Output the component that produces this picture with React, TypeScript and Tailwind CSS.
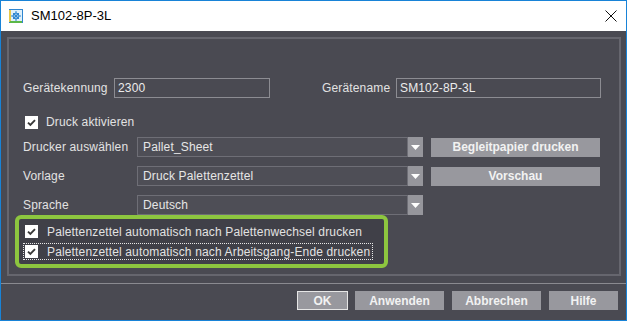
import React from 'react';

function CheckBox() {
  return (
    <div className="flex h-[13px] w-[13px] shrink-0 items-center justify-center bg-white">
      <svg width="13" height="13" viewBox="0 0 13 13">
        <path d="M3 6.6 L5.4 9 L10 4.2" fill="none" stroke="#3a3a3a" strokeWidth="1.9" />
      </svg>
    </div>
  );
}

function Dropdown({ value }: { value: string }) {
  return (
    <div className="flex h-[20px] w-[286px]">
      <div className="flex flex-1 items-center border border-[#6e6e76] bg-[#4e4e56] pl-[5px] text-[#e6e6e6]">
        {value}
      </div>
      <div className="flex w-[15px] items-center justify-center bg-[#96969c] pt-[2px]">
        <svg width="9" height="6" viewBox="0 0 9 6">
          <path d="M0 0 H9 L4.5 5 Z" fill="#ffffff" />
        </svg>
      </div>
    </div>
  );
}

function GrayButton({ label, className }: { label: string; className: string }) {
  return (
    <button
      className={
        'flex h-[19px] items-center justify-center bg-[#98989e] text-[12px] font-bold tracking-normal text-[#f2f2f2] ' +
        className
      }
    >
      {label}
    </button>
  );
}

function TitleIcon() {
  return (
    <svg width="14" height="14" viewBox="0 0 14 14">
      <rect x="0.5" y="0.5" width="13" height="13" fill="#dff0fa" stroke="#2f86d0" />
      <path d="M1 13 V1" stroke="#e8c84a" strokeWidth="2" />
      <path d="M1 13 H13" stroke="#5cb848" strokeWidth="2" />
      <path d="M4 4 L10 10 M10 4 L4 10 M7 2 V12 M2 7 H12" stroke="#2f86d0" strokeWidth="1" />
      <circle cx="7" cy="7" r="3" fill="none" stroke="#2f86d0" strokeWidth="1" />
    </svg>
  );
}

export default function App() {
  return (
    <div className="flex h-[321px] w-[627px] flex-col border border-[#1883d7] font-['Liberation_Sans',Arial,sans-serif] text-[12px] tracking-[0.15px] text-[#e2e2e2]">
      <div className="flex h-[30px] shrink-0 items-center bg-white pl-[8px] pr-[9px]">
        <TitleIcon />
        <span className="ml-[8px] text-[13px] tracking-normal text-black">SM102-8P-3L</span>
        <svg className="ml-auto" width="12" height="12" viewBox="0 0 12 12">
          <path d="M0.5 0.5 L11.5 11.5 M11.5 0.5 L0.5 11.5" stroke="#111" strokeWidth="1" />
        </svg>
      </div>

      <div className="flex flex-1 flex-col bg-[#4a4a52] pt-[6px]">
        <div className="ml-[6px] flex h-[239px] w-[614px] flex-col border-2 border-[#66666e]">
          <div className="mt-[39px] flex h-[20px] items-center pl-[14px]">
            <span className="w-[91px]">Gerätekennung</span>
            <div className="flex h-[20px] w-[156px] items-center border border-[#8c8c92] pl-[3px] text-[#ececec]">
              2300
            </div>
            <span className="ml-[52px] w-[74px]">Gerätename</span>
            <div className="flex h-[20px] w-[205px] items-center border border-[#8c8c92] pl-[3px] text-[#ececec]">
              SM102-8P-3L
            </div>
          </div>

          <div className="mt-[14px] flex h-[20px] items-center gap-[8px] pl-[16px]">
            <CheckBox />
            <span>Druck aktivieren</span>
          </div>

          <div className="mt-[5px] flex items-center pl-[14px]">
            <span className="w-[114px]">Drucker auswählen</span>
            <Dropdown value="Pallet_Sheet" />
            <GrayButton label="Begleitpapier drucken" className="ml-[8px] w-[169px]" />
          </div>

          <div className="mt-[9px] flex items-center pl-[14px]">
            <span className="w-[114px]">Vorlage</span>
            <Dropdown value="Druck Palettenzettel" />
            <GrayButton label="Vorschau" className="ml-[8px] w-[169px]" />
          </div>

          <div className="mt-[9px] flex items-center pl-[14px]">
            <span className="w-[114px]">Sprache</span>
            <Dropdown value="Deutsch" />
          </div>

          <div className="ml-[6px] flex h-[53px] w-[373px] flex-col gap-[3px] rounded-[6px] border-4 border-[#8dc63f] bg-[#404048] pl-[4px] pt-[4px]">
            <div className="flex h-[17px] w-[350px] items-center gap-[9px] border border-transparent pl-[1px]">
              <CheckBox />
              <span>Palettenzettel automatisch nach Palettenwechsel drucken</span>
            </div>
            <div className="flex h-[17px] w-[350px] items-center gap-[9px] border border-dotted border-[#e8e8e8] pl-[1px]">
              <CheckBox />
              <span>Palettenzettel automatisch nach Arbeitsgang-Ende drucken</span>
            </div>
          </div>
        </div>

        <div className="mt-[7px] h-px bg-[#8a8a90]" />

        <div className="mt-[7px] flex justify-end gap-[8px] pr-[8px]">
          <GrayButton label="OK" className="mr-[-1px] w-[51px] border border-[#e6e6e6]" />
          <GrayButton label="Anwenden" className="w-[89px]" />
          <GrayButton label="Abbrechen" className="w-[89px]" />
          <GrayButton label="Hilfe" className="w-[69px]" />
        </div>
      </div>
    </div>
  );
}
